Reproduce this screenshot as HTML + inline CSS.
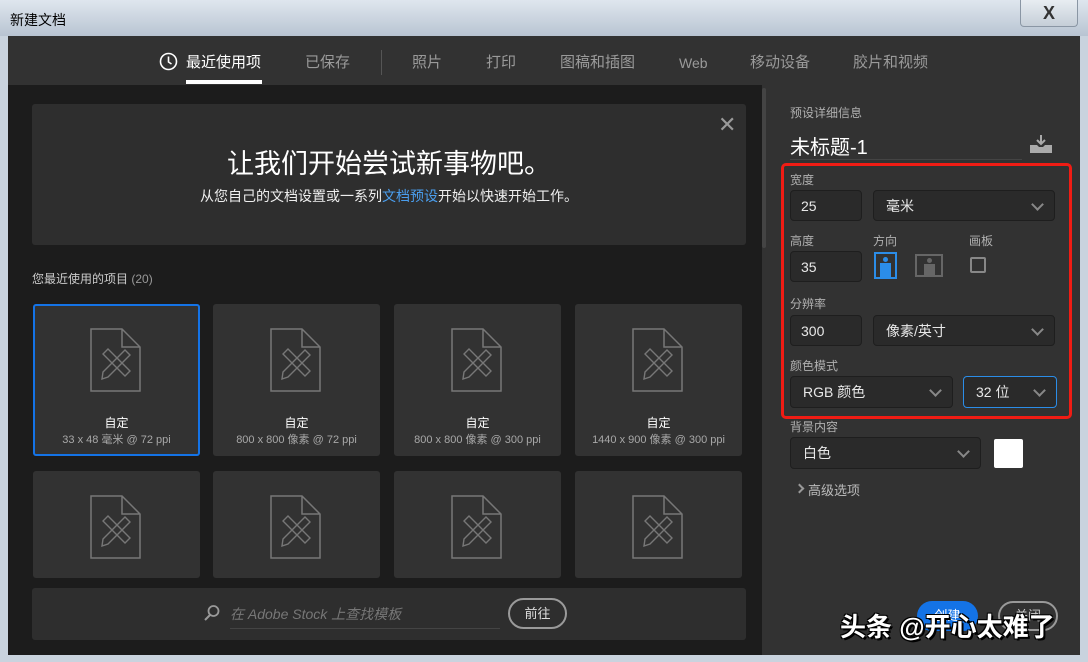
<!DOCTYPE html>
<html><head><meta charset="utf-8"><style>
*{margin:0;padding:0;box-sizing:border-box}
body{width:1088px;height:662px;overflow:hidden;background:#c9d3de;font-family:"Liberation Sans","Noto Sans CJK SC",sans-serif;position:relative}
.abs{position:absolute}
.titlebar{left:0;top:0;width:1088px;height:36px;background:linear-gradient(#dfe6ee,#b8c4d2)}
.main{left:8px;top:36px;width:1072px;height:619px;background:#323232}
.left{left:8px;top:85px;width:754px;height:570px;background:#1c1c1c}
.tab{top:52px;font-size:15px;line-height:20px;color:#9a9a9a;font-family:"Noto Sans CJK SC",sans-serif}
.card{background:#323232;border-radius:3px;width:167px;height:152px}
.card .t1{position:absolute;top:110px;width:100%;text-align:center;color:#fff;font-size:12px}
.card .t2{position:absolute;top:127px;width:100%;text-align:center;color:#a8a8a8;font-size:11px}
.card svg{position:absolute;left:57px;top:24px}
.lbl{font-size:12px;color:#b0b0b0}
.inp{background:#2a2a2a;border:1px solid #1e1e1e;border-radius:4px;color:#e8e8e8;font-size:14px;padding-left:10px;line-height:30px}
.chev{position:absolute;right:12px;top:9px;width:9px;height:9px;border-right:2px solid #888;border-bottom:2px solid #888;transform:rotate(45deg)}
</style></head><body>
<div class="abs titlebar"></div>
<div class="abs" style="left:10px;top:10px;font-size:14px;color:#000">新建文档</div>
<div class="abs" style="left:1020px;top:0;width:58px;height:27px;border:1px solid #8a96a4;border-top:none;border-radius:0 0 4px 4px;background:linear-gradient(#e8edf2,#c5ced8);text-align:center;font-size:18px;font-weight:bold;color:#333;line-height:26px">X</div>
<div class="abs main"></div>
<svg class="abs" style="left:159px;top:52px" width="19" height="19" viewBox="0 0 19 19"><circle cx="9.5" cy="9.5" r="8" fill="none" stroke="#fff" stroke-width="1.6"/><path d="M9.5 4.5v5.5l3 2" fill="none" stroke="#fff" stroke-width="1.6"/></svg>
<div class="abs tab" style="left:186px;color:#fff">最近使用项</div>
<div class="abs" style="left:186px;top:80px;width:76px;height:4px;background:#fff"></div>
<div class="abs tab" style="left:305px">已保存</div>
<div class="abs" style="left:381px;top:50px;width:1px;height:25px;background:#555"></div>
<div class="abs tab" style="left:412px">照片</div>
<div class="abs tab" style="left:486px">打印</div>
<div class="abs tab" style="left:560px">图稿和插图</div>
<div class="abs tab" style="left:679px;font-family:'Liberation Sans',sans-serif;font-size:14px;top:53px">Web</div>
<div class="abs tab" style="left:750px">移动设备</div>
<div class="abs tab" style="left:853px">胶片和视频</div>
<div class="abs left"></div>
<div class="abs" style="left:762px;top:88px;width:4px;height:160px;background:#444;border-radius:2px"></div>
<div class="abs" style="left:32px;top:104px;width:714px;height:141px;background:#2e2e2e;border-radius:3px"></div>
<div class="abs" style="left:718px;top:112px;font-size:22px;color:#9a9a9a">✕</div>
<div class="abs" style="left:32px;top:142px;width:714px;text-align:center;font-size:27px;color:#fff">让我们开始尝试新事物吧。</div>
<div class="abs" style="left:32px;top:186px;width:714px;text-align:center;font-size:14px;color:#eee">从您自己的文档设置或一系列<span style="color:#4a9eee">文档预设</span>开始以快速开始工作。</div>
<div class="abs" style="left:32px;top:270px;font-size:12px;color:#ccc">您最近使用的项目 <span style="color:#999">(20)</span></div>

<div class="abs card" style="left:33px;top:304px;box-shadow:inset 0 0 0 2px #1473e6"><svg width="52" height="64" viewBox="0 0 52 64"><path d="M1 1h31l18 18v44H1z M32 1v18h18" fill="none" stroke="#777" stroke-width="1.5"/><path d="M13 44l22-22 5 5-22 22-6 2z M13 26l5-5 22 22-5 5z" fill="none" stroke="#777" stroke-width="1.4"/></svg><div class="t1">自定</div><div class="t2">33 x 48 毫米 @ 72 ppi</div></div>
<div class="abs card" style="left:213px;top:304px"><svg width="52" height="64" viewBox="0 0 52 64"><path d="M1 1h31l18 18v44H1z M32 1v18h18" fill="none" stroke="#777" stroke-width="1.5"/><path d="M13 44l22-22 5 5-22 22-6 2z M13 26l5-5 22 22-5 5z" fill="none" stroke="#777" stroke-width="1.4"/></svg><div class="t1">自定</div><div class="t2">800 x 800 像素 @ 72 ppi</div></div>
<div class="abs card" style="left:394px;top:304px"><svg width="52" height="64" viewBox="0 0 52 64"><path d="M1 1h31l18 18v44H1z M32 1v18h18" fill="none" stroke="#777" stroke-width="1.5"/><path d="M13 44l22-22 5 5-22 22-6 2z M13 26l5-5 22 22-5 5z" fill="none" stroke="#777" stroke-width="1.4"/></svg><div class="t1">自定</div><div class="t2">800 x 800 像素 @ 300 ppi</div></div>
<div class="abs card" style="left:575px;top:304px"><svg width="52" height="64" viewBox="0 0 52 64"><path d="M1 1h31l18 18v44H1z M32 1v18h18" fill="none" stroke="#777" stroke-width="1.5"/><path d="M13 44l22-22 5 5-22 22-6 2z M13 26l5-5 22 22-5 5z" fill="none" stroke="#777" stroke-width="1.4"/></svg><div class="t1">自定</div><div class="t2">1440 x 900 像素 @ 300 ppi</div></div>
<div class="abs card" style="left:33px;top:471px;height:107px"><svg width="52" height="64" viewBox="0 0 52 64"><path d="M1 1h31l18 18v44H1z M32 1v18h18" fill="none" stroke="#777" stroke-width="1.5"/><path d="M13 44l22-22 5 5-22 22-6 2z M13 26l5-5 22 22-5 5z" fill="none" stroke="#777" stroke-width="1.4"/></svg></div>
<div class="abs card" style="left:213px;top:471px;height:107px"><svg width="52" height="64" viewBox="0 0 52 64"><path d="M1 1h31l18 18v44H1z M32 1v18h18" fill="none" stroke="#777" stroke-width="1.5"/><path d="M13 44l22-22 5 5-22 22-6 2z M13 26l5-5 22 22-5 5z" fill="none" stroke="#777" stroke-width="1.4"/></svg></div>
<div class="abs card" style="left:394px;top:471px;height:107px"><svg width="52" height="64" viewBox="0 0 52 64"><path d="M1 1h31l18 18v44H1z M32 1v18h18" fill="none" stroke="#777" stroke-width="1.5"/><path d="M13 44l22-22 5 5-22 22-6 2z M13 26l5-5 22 22-5 5z" fill="none" stroke="#777" stroke-width="1.4"/></svg></div>
<div class="abs card" style="left:575px;top:471px;height:107px"><svg width="52" height="64" viewBox="0 0 52 64"><path d="M1 1h31l18 18v44H1z M32 1v18h18" fill="none" stroke="#777" stroke-width="1.5"/><path d="M13 44l22-22 5 5-22 22-6 2z M13 26l5-5 22 22-5 5z" fill="none" stroke="#777" stroke-width="1.4"/></svg></div>

<div class="abs" style="left:32px;top:588px;width:714px;height:52px;background:#2e2e2e;border-radius:3px"></div>
<svg class="abs" style="left:203px;top:604px" width="18" height="18" viewBox="0 0 18 18"><circle cx="10.5" cy="7" r="5" fill="none" stroke="#999" stroke-width="1.8"/><path d="M7 11l-5 5" stroke="#999" stroke-width="2"/></svg>
<div class="abs" style="left:230px;top:604px;font-size:14px;color:#777;font-style:italic">在 Adobe Stock 上查找模板</div>
<div class="abs" style="left:230px;top:628px;width:270px;height:1px;background:#444"></div>
<div class="abs" style="left:508px;top:598px;width:59px;height:31px;border:2px solid #9a9a9a;border-radius:16px;color:#ddd;font-size:13px;text-align:center;line-height:27px">前往</div>

<div class="abs lbl" style="left:790px;top:104px">预设详细信息</div>
<div class="abs" style="left:790px;top:131px;font-size:20px;color:#fff">未标题-1</div>
<div class="abs" style="left:790px;top:159px;width:232px;height:1px;background:#444"></div>
<svg class="abs" style="left:1030px;top:135px" width="22" height="18" viewBox="0 0 22 18"><path d="M11 0v8M7 5l4 4 4-4" stroke="#aaa" stroke-width="2" fill="none"/><path d="M0 10h7l2 2h4l2-2h7v8H0z" fill="#aaa"/></svg>
<div class="abs" style="left:781px;top:163px;width:291px;height:256px;border:3px solid #f01c14;border-radius:5px"></div>
<div class="abs lbl" style="left:790px;top:171px">宽度</div>
<div class="abs inp" style="left:790px;top:190px;width:72px;height:31px">25</div>
<div class="abs inp" style="left:873px;top:190px;width:182px;height:31px;padding-left:12px">毫米<div class="chev"></div></div>
<div class="abs lbl" style="left:790px;top:232px">高度</div>
<div class="abs lbl" style="left:873px;top:232px">方向</div>
<div class="abs lbl" style="left:969px;top:232px">画板</div>
<div class="abs inp" style="left:790px;top:251px;width:72px;height:31px">35</div>
<div class="abs" style="left:874px;top:252px;width:23px;height:27px;border:2px solid #2b8de8"><div class="abs" style="left:7px;top:3px;width:5px;height:5px;border-radius:50%;background:#2b8de8"></div><div class="abs" style="left:4px;top:9px;width:11px;height:14px;background:#2b8de8"></div></div>
<div class="abs" style="left:915px;top:254px;width:28px;height:23px;border:2px solid #666"><div class="abs" style="left:10px;top:2px;width:5px;height:5px;border-radius:50%;background:#666"></div><div class="abs" style="left:7px;top:8px;width:11px;height:11px;background:#666"></div></div>
<div class="abs" style="left:970px;top:257px;width:16px;height:16px;border:2px solid #888;border-radius:2px"></div>
<div class="abs lbl" style="left:790px;top:295px">分辨率</div>
<div class="abs inp" style="left:790px;top:315px;width:72px;height:31px">300</div>
<div class="abs inp" style="left:873px;top:315px;width:182px;height:31px;padding-left:12px">像素/英寸<div class="chev"></div></div>
<div class="abs lbl" style="left:790px;top:357px">颜色模式</div>
<div class="abs inp" style="left:790px;top:376px;width:163px;height:32px;padding-left:12px">RGB 颜色<div class="chev"></div></div>
<div class="abs inp" style="left:963px;top:376px;width:94px;height:32px;border-color:#2b8de8;padding-left:12px">32 位<div class="chev"></div></div>
<div class="abs lbl" style="left:790px;top:418px">背景内容</div>
<div class="abs inp" style="left:790px;top:437px;width:191px;height:32px;padding-left:12px">白色<div class="chev"></div></div>
<div class="abs" style="left:994px;top:439px;width:29px;height:29px;background:#fff;border-radius:2px"></div>
<div class="abs" style="left:796px;top:485px;width:7px;height:7px;border-right:2px solid #999;border-bottom:2px solid #999;transform:rotate(-45deg)"></div>
<div class="abs" style="left:808px;top:480px;font-size:13px;color:#bbb">高级选项</div>
<div class="abs" style="left:917px;top:601px;width:61px;height:30px;background:#1473e6;border-radius:15px;color:#fff;font-size:13px;text-align:center;line-height:30px">创建</div>
<div class="abs" style="left:998px;top:601px;width:60px;height:30px;border:2px solid #999;border-radius:15px;color:#ccc;font-size:13px;text-align:center;line-height:26px">关闭</div>
<div class="abs" style="left:840px;top:607px;font-size:26px;font-weight:bold;color:#fff;text-shadow:2px 2px 0 #000,-1px -1px 0 #000,1px -1px 0 #000,-1px 1px 0 #000">头条 @开心太难了</div>
</body></html>
